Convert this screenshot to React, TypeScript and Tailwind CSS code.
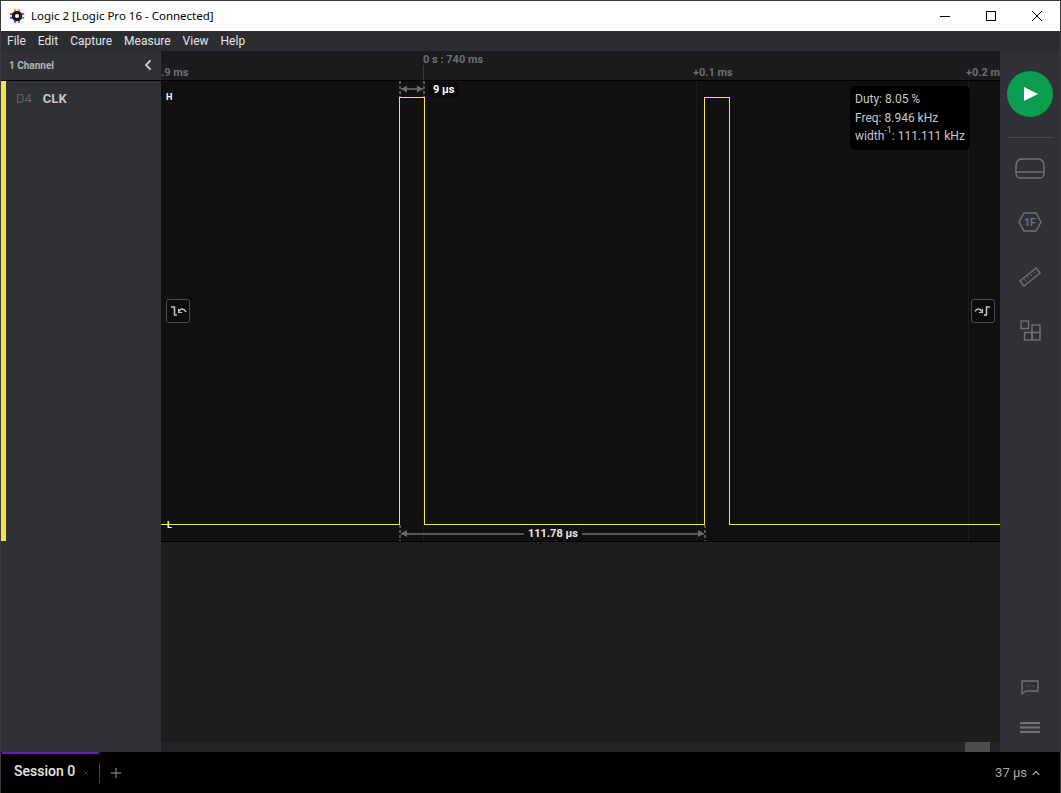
import React from "react";
import { ChevronLeft, ChevronUp, Plus, X } from "lucide-react";

const Y = "#f5e53c";
const G = "#6f7075";

function Logo() {
  return (
    <svg width="16" height="16" viewBox="0 0 16 16">
      <rect x="0" y="0" width="16" height="16" rx="3" fill="#f4f4f8" />
      <rect x="5" y="1" width="2" height="3" fill="#e8a030" />
      <rect x="9" y="1" width="2" height="3" fill="#e8b030" />
      <rect x="1" y="5" width="3" height="2" fill="#e04040" />
      <rect x="1" y="9" width="3" height="2" fill="#3080e0" />
      <rect x="12" y="5" width="3" height="2" fill="#e04090" />
      <rect x="12" y="9" width="3" height="2" fill="#40b0d0" />
      <rect x="5" y="12" width="2" height="3" fill="#a050e0" />
      <rect x="9" y="12" width="2" height="3" fill="#c060e0" />
      <circle cx="8" cy="8" r="5.2" fill="#17171c" />
      <circle cx="8" cy="8" r="2.1" fill="#f0f0f0" />
    </svg>
  );
}

function Waveform() {
  return (
    <svg className="absolute left-0 top-0" width="839" height="460" viewBox="161 81 839 460" fill="none" shapeRendering="crispEdges">
      <path d="M423.5 81V541M696.5 81V541M968.5 81V541" stroke="#1c1c1e" />
      <path d="M161 524.5H399.5V97.5H424.5V524.5H704.5V97.5H729.5V524.5H1000" stroke={Y} />
      <path d="M400 81V97M424 81V97M400 525V541M705 525V541" stroke="#55565b" strokeWidth="2" strokeDasharray="3 2" />
      <path d="M401 89H423M401 533.5H704" stroke="#55565b" strokeWidth="2" />
      <path d="M401 89l6 -3.5v7zM423 89l-6 -3.5v7zM401 533.5l6 -3.5v7zM704 533.5l-6 -3.5v7z" fill="#6a6b70" shapeRendering="auto" />
    </svg>
  );
}

function NavButton({ flip }: { flip?: boolean }) {
  return (
    <div className="w-6 h-6 rounded-[3px] border border-[#4c4d52] bg-[#0b0b0c] flex items-center justify-center">
      <svg width="18" height="12" viewBox="0 0 18 12" fill="none" stroke="#c4c5c8" strokeWidth="1.5">
        {flip ? (
          <>
            <path d="M1 6.5C3 3 6 3.5 8 6.5" />
            <path d="M5 7.5L8.5 7.5L8.5 4" strokeWidth="1.1" />
            <path d="M10 10H12.5V2H16" />
          </>
        ) : (
          <>
            <path d="M2 2H5.5V10H8" />
            <path d="M10 6.5C11.5 3 15 3 17 7" />
            <path d="M13 7.5L9.5 7.5L9.5 4" strokeWidth="1.1" />
          </>
        )}
      </svg>
    </div>
  );
}

function RailIcons() {
  return (
    <div className="flex flex-col items-center">
      <svg className="mt-[20px]" width="30" height="21" viewBox="0 0 30 21" fill="none" stroke="#6f7075" strokeWidth="1.5">
        <path d="M7 1H23C27 1 29 4 29 9V15C29 18 27 20 25 20H5C3 20 1 18 1 15V9C1 4 3 1 7 1Z" />
        <path d="M1 14H29" />
      </svg>
      <svg className="mt-[33px]" width="24" height="20" viewBox="0 0 24 20" fill="none">
        <path d="M6 1H18L23 10L18 19H6L1 10Z" stroke={G} strokeWidth="1.5" />
        <text x="12" y="14" textAnchor="middle" fill={G} fontSize="10.5" fontWeight="700" fontFamily="Roboto, sans-serif">1F</text>
      </svg>
      <svg className="mt-[35px]" width="22" height="20" viewBox="0 0 22 20" fill="none" stroke={G} strokeWidth="1.4">
        <path d="M1 14L17 1L21 6L5 19Z" />
        <path d="M5 12L7 14M8 9.5L10 11.5M11 7L13 9M14 4.5L16 6.5" strokeWidth="1" />
      </svg>
      <svg className="mt-[33px]" width="21" height="21" viewBox="0 0 21 21" fill="none" stroke={G} strokeWidth="1.4">
        <rect x="1" y="1" width="7.5" height="7.5" />
        <rect x="12" y="5" width="8" height="7.5" />
        <rect x="4.5" y="12.5" width="7.5" height="7.5" />
        <rect x="12" y="12.5" width="8" height="7.5" />
      </svg>
    </div>
  );
}

function WindowButtons() {
  return (
    <div className="ml-auto flex items-center">
      <div className="w-[46px] flex justify-center">
        <svg width="10" height="10" viewBox="0 0 10 10" stroke="#000" shapeRendering="crispEdges"><path d="M0 5.5H10" /></svg>
      </div>
      <div className="w-[46px] flex justify-center">
        <svg width="10" height="10" viewBox="0 0 10 10" fill="none" stroke="#000" shapeRendering="crispEdges"><rect x="0.5" y="0.5" width="9" height="9" /></svg>
      </div>
      <div className="w-[46px] flex justify-center">
        <svg width="10" height="10" viewBox="0 0 10 10" fill="none" stroke="#000"><path d="M0 0L10 10M10 0L0 10" /></svg>
      </div>
    </div>
  );
}

export default function App() {
  return (
    <div className="w-[1061px] h-[793px] flex flex-col overflow-hidden border border-b-0 border-[#3c3c3e] bg-black font-['Roboto',sans-serif]">
      <div className="h-[30px] shrink-0 bg-white flex items-center pl-[8px] text-black">
        <Logo />
        <span className="ml-[6px] text-[11.5px] font-['Noto_Sans','Open_Sans',sans-serif]">Logic 2 [Logic Pro 16 - Connected]</span>
        <WindowButtons />
      </div>

      <div className="h-[20px] shrink-0 bg-[#2b2d31] flex items-center pl-[6px] gap-[12px] text-[12px] text-[#e4e5e7]">
        <span>File</span>
        <span>Edit</span>
        <span>Capture</span>
        <span>Measure</span>
        <span>View</span>
        <span>Help</span>
      </div>

      <div className="flex-1 flex min-h-0">
        <div className="w-[160px] shrink-0 bg-[#2f3136] flex flex-col">
          <div className="h-[30px] shrink-0 border-b border-black flex items-center justify-between pl-[8px] pr-[5px]">
            <span className="text-[10px] font-bold text-[#b4b5b8]">1 Channel</span>
            <ChevronLeft size={16} strokeWidth={3} color="#c4c5c8" className="-mt-[2px]" />
          </div>
          <div className="h-[460px] shrink-0 border-l-[5px] border-[#f5e53c] flex items-start pt-[10px] pl-[10px] gap-[11px] text-[13px] leading-[16px]">
            <span className="text-[#5f6065]">D4</span>
            <span className="font-bold text-[#c4c5c8]">CLK</span>
          </div>
        </div>

        <div className="flex-1 min-w-0 flex flex-col bg-[#1d1d1e]">
          <div className="h-[30px] shrink-0 relative bg-[#1b1b1d] border-b border-black text-[11px] font-bold text-[#6d6e72] overflow-hidden">
            <span className="absolute left-0 top-[14px]">.9 ms</span>
            <span className="absolute left-[262px] top-[1px]">0 s : 740 ms</span>
            <span className="absolute left-[532px] top-[14px]">+0.1 ms</span>
            <span className="absolute left-[805px] top-[14px] whitespace-nowrap">+0.2 ms</span>
            <div className="absolute left-[262px] top-[14px] bottom-0 w-px bg-[#3a3a3c]" />
          </div>

          <div className="h-[461px] shrink-0 relative bg-[#101010] border-b border-black overflow-hidden">
            <Waveform />
            <span className="absolute left-[5px] top-[10px] text-[9px] font-bold text-white">H</span>
            <span className="absolute left-[6px] top-[438px] text-[9px] font-bold text-white">L</span>
            <div className="absolute left-[5px] top-[218px]"><NavButton /></div>
            <div className="absolute left-[810px] top-[218px]"><NavButton flip /></div>
            <div className="absolute left-[268px] top-[1px] h-[15px] px-[4px] rounded-[3px] bg-[#0a0a0a] text-[11px] leading-[15px] font-bold text-white">9 µs</div>
            <div className="absolute left-[363px] top-[445px] h-[15px] px-[4px] rounded-[3px] bg-[#101010] text-[11px] leading-[15px] font-bold text-[#e8e8e8]">111.78 µs</div>
            <div className="absolute left-[689px] top-[5px] w-[120px] h-[64px] rounded-[5px] bg-black px-[5px] pt-[4px] text-[12px] leading-[18px] text-[#c8c9cb] whitespace-nowrap">
              <div>Duty: 8.05 %</div>
              <div className="mt-px">Freq: 8.946 kHz</div>
              <div>width<sup className="text-[9px] leading-[0] align-[3px]">-1</sup>: 111.111 kHz</div>
            </div>
          </div>

          <div className="flex-1" />
          <div className="h-[10px] shrink-0 bg-[#242426] relative">
            <div className="absolute left-[804px] top-0 h-[10px] w-[25px] bg-[#4d4d4f]" />
          </div>
        </div>

        <div className="w-[60px] shrink-0 bg-[#2f3136] flex flex-col items-center">
          <div className="mt-[20px] w-[46px] h-[46px] rounded-full bg-[#0b9d4f] flex items-center justify-center">
            <svg className="ml-[2px]" width="14" height="14" viewBox="0 0 14 14" fill="#fff"><path d="M0 0L14 7L0 14Z" /></svg>
          </div>
          <div className="mt-[20px] w-[46px] h-px bg-[#4a4b50]" />
          <RailIcons />
          <svg className="mt-auto" width="18" height="15" viewBox="0 0 18 15" fill="none" stroke={G} strokeWidth="1.4">
            <path d="M1 1H17V11H4.5L1 14Z" />
            <path d="M5.5 6H6.5M8.5 6H9.5M11.5 6H12.5" />
          </svg>
          <svg className="mt-[27px] mb-[19px]" width="20" height="11" viewBox="0 0 20 11" fill={G}>
            <rect x="0" y="0" width="20" height="2.2" />
            <rect x="0" y="4.4" width="20" height="2.2" />
            <rect x="0" y="8.8" width="20" height="2.2" />
          </svg>
        </div>
      </div>

      <div className="h-[41px] shrink-0 bg-black flex relative">
        <div className="absolute left-[1px] top-0 w-[97px] h-[2px] bg-[#6a1fa8]" />
        <div className="flex items-center pl-[13px]">
          <span className="text-[14px] font-medium text-[#e6e6e6] -mt-[2px]">Session 0</span>
          <X size={8} strokeWidth={1.5} color="#6f7075" className="ml-[7px]" />
          <div className="ml-[9px] h-[20px] w-px bg-[#444548]" />
          <Plus size={16} strokeWidth={2} color={G} className="ml-[8px]" />
        </div>
        <div className="ml-auto flex items-center pr-[18px] text-[13px] text-[#a8a9ab]">
          <span>37 µs</span>
          <ChevronUp size={12} strokeWidth={2.2} color="#a8a9ab" className="ml-[3px]" />
        </div>
      </div>
    </div>
  );
}
